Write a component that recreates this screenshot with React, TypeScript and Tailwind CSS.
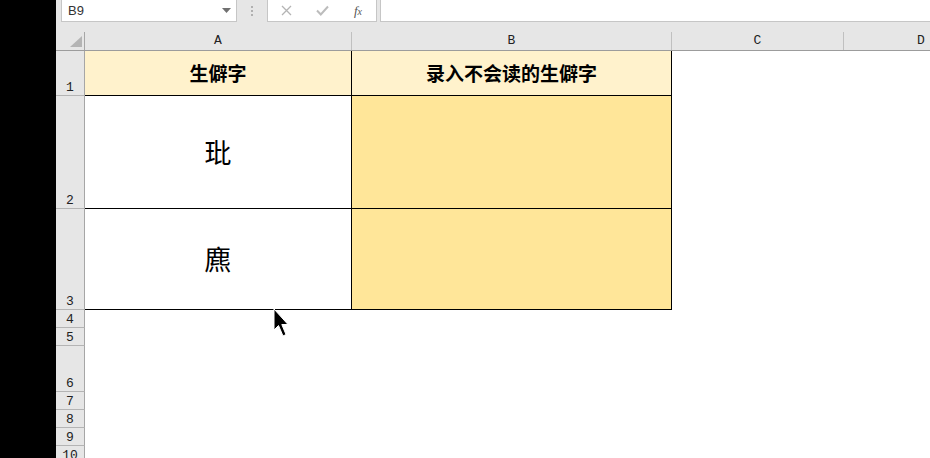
import React from "react";

const mono = { fontFamily: '"Liberation Mono", "DejaVu Sans Mono", monospace' };
const cjk = { fontFamily: '"Noto Sans CJK SC", "Noto Sans", sans-serif' };

const rows: { n: string; h: string }[] = [
  { n: "4", h: "h-[18px]" },
  { n: "5", h: "h-[18px]" },
  { n: "6", h: "h-[46px]" },
  { n: "7", h: "h-[18px]" },
  { n: "8", h: "h-[18px]" },
  { n: "9", h: "h-[18px]" },
  { n: "10", h: "h-[18px]" },
];

function RowHead({ n }: { n: string }) {
  return (
    <div
      className="w-[29px] shrink-0 bg-[#e6e6e6] border-r border-r-[#a6a6a6] border-b border-b-[#b4b4b4] flex items-end justify-center pb-[1px] text-[13px] leading-[13px] text-[#222]"
      style={mono}
    >
      {n}
    </div>
  );
}

export default function App() {
  return (
    <div className="w-[930px] h-[458px] overflow-hidden flex bg-white relative">
      <div className="w-[56px] shrink-0 bg-black" />
      <div className="flex-1 flex flex-col min-w-0 overflow-hidden">
        {/* toolbar */}
        <div className="h-[22px] bg-[#e6e6e6] flex items-stretch shrink-0">
          <div className="ml-[5px] w-[176px] shrink-0 bg-white border border-t-0 border-[#c6c6c6] flex items-center justify-between pl-[6px] pr-[5px]">
            <span className="text-[13px] text-[#333] leading-none" style={{ fontFamily: '"Liberation Sans", Arial, sans-serif' }}>
              B9
            </span>
            <svg width="9" height="5" viewBox="0 0 9 5">
              <path d="M0 0 L9 0 L4.5 5 Z" fill="#707070" />
            </svg>
          </div>
          <div className="w-[30px] shrink-0 flex flex-col items-center justify-center gap-[2px]">
            <div className="w-[2px] h-[2px] bg-[#b0b0b0]" />
            <div className="w-[2px] h-[2px] bg-[#b0b0b0]" />
            <div className="w-[2px] h-[2px] bg-[#b0b0b0]" />
          </div>
          <div className="w-[110px] shrink-0 bg-white border border-t-0 border-[#c6c6c6] flex items-center">
            <div className="w-[36px] flex justify-center">
              <svg width="11" height="11" viewBox="0 0 11 11">
                <path d="M1 1 L10 10 M10 1 L1 10" stroke="#b4b4b4" strokeWidth="1.3" />
              </svg>
            </div>
            <div className="w-[36px] flex justify-center">
              <svg width="13" height="11" viewBox="0 0 13 11">
                <path d="M1 5.5 L4.8 9.5 L12 1.5" stroke="#bcbcbc" strokeWidth="2" fill="none" />
              </svg>
            </div>
            <div className="w-[36px] flex justify-center">
              <span className="italic text-[13px] text-[#555] leading-none" style={{ fontFamily: '"Liberation Serif", serif' }}>
                f<span className="text-[10px]">x</span>
              </span>
            </div>
          </div>
          <div className="ml-[3px] flex-1 bg-white border-l border-b border-[#c6c6c6]" />
        </div>
        {/* column headers */}
        <div className="h-[29px] bg-[#e6e6e6] flex items-end border-b border-b-[#9c9c9c] shrink-0 text-[13px] text-[#222]" style={mono}>
          <div className="w-[29px] h-[18px] shrink-0 border-r border-r-[#a6a6a6] relative">
            <svg className="absolute left-[14px] top-[4px]" width="12" height="11" viewBox="0 0 12 11">
              <path d="M12 0 L12 11 L0 11 Z" fill="#b4b4b4" />
            </svg>
          </div>
          <div className="w-[267px] h-[18px] shrink-0 border-r border-r-[#c0c0c0] flex items-center justify-center">A</div>
          <div className="w-[320px] h-[18px] shrink-0 border-r border-r-[#c0c0c0] flex items-center justify-center">B</div>
          <div className="w-[172px] h-[18px] shrink-0 border-r border-r-[#c0c0c0] flex items-center justify-center">C</div>
          <div className="w-[154px] h-[18px] shrink-0 flex items-center justify-center">D</div>
        </div>
        {/* row 1 */}
        <div className="flex h-[45px] shrink-0">
          <RowHead n="1" />
          <div className="w-[267px] shrink-0 bg-[#fff2cc] border-r border-b border-black flex items-center justify-center font-bold text-[19px] text-black" style={cjk}>
            生僻字
          </div>
          <div className="w-[320px] shrink-0 bg-[#fff2cc] border-r border-b border-black flex items-center justify-center font-bold text-[19px] text-black" style={cjk}>
            录入不会读的生僻字
          </div>
        </div>
        {/* row 2 */}
        <div className="flex h-[113px] shrink-0">
          <RowHead n="2" />
          <div className="w-[267px] shrink-0 bg-white border-r border-b border-black flex items-center justify-center text-[27px] text-black" style={cjk}>
            玭
          </div>
          <div className="w-[320px] shrink-0 bg-[#ffe699] border-r border-b border-black" />
        </div>
        {/* row 3 */}
        <div className="flex h-[101px] shrink-0">
          <RowHead n="3" />
          <div className="w-[267px] shrink-0 bg-white border-r border-b border-black flex items-center justify-center text-[27px] text-black" style={cjk}>
            麃
          </div>
          <div className="w-[320px] shrink-0 bg-[#ffe699] border-r border-b border-black" />
        </div>
        {rows.map((r) => (
          <div key={r.n} className={`flex shrink-0 ${r.h}`}>
            <RowHead n={r.n} />
          </div>
        ))}
      </div>
      {/* mouse cursor */}
      <svg className="absolute left-[273px] top-[308px]" width="16" height="30" viewBox="0 0 16 30">
        <path
          d="M1 1 L1 22 L5.5 17.5 L10 28 L13 26.5 L8.8 16.5 L15 16.5 Z"
          fill="#000"
          stroke="#fff"
          strokeWidth="1"
          strokeLinejoin="miter"
        />
      </svg>
    </div>
  );
}
